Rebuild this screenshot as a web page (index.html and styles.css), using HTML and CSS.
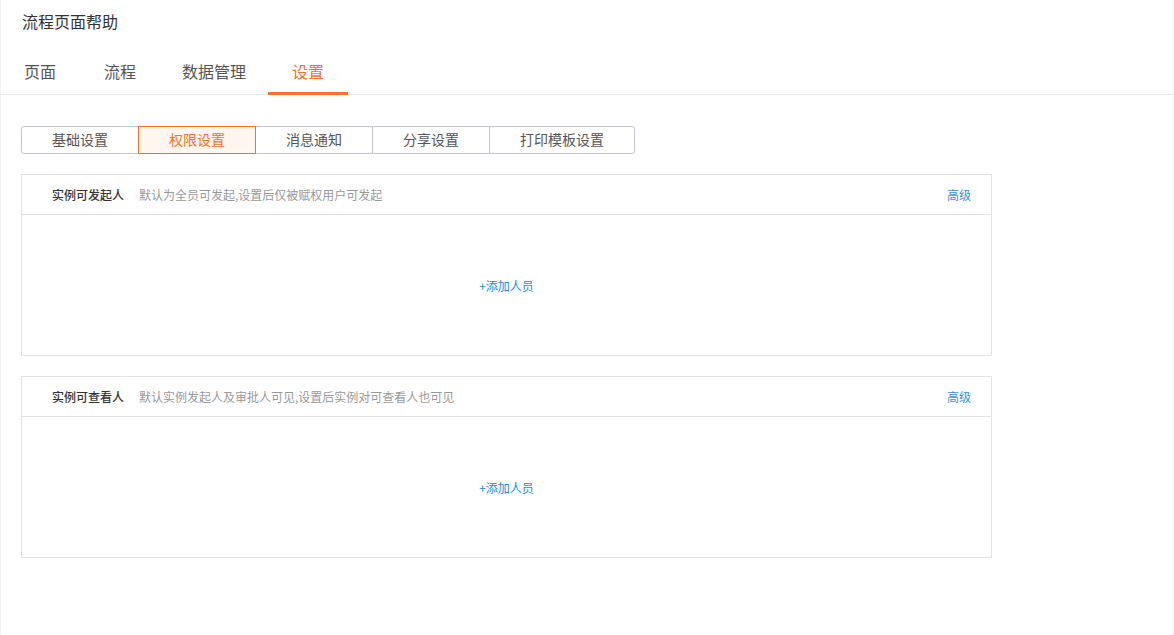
FILE: index.html
```html
<!DOCTYPE html>
<html lang="zh-CN">
<head>
<meta charset="utf-8">
<title>流程页面帮助</title>
<link rel="stylesheet" href="styles.css">
</head>
<body>
<div class="page">
  <div class="title">流程页面帮助</div>
  <div class="tabs">
    <div class="tab">页面</div>
    <div class="tab">流程</div>
    <div class="tab tab-wide">数据管理</div>
    <div class="tab active">设置</div>
  </div>
  <div class="content">
    <div class="seg">
      <div class="seg-item">基础设置</div>
      <div class="seg-item active">权限设置</div>
      <div class="seg-item">消息通知</div>
      <div class="seg-item">分享设置</div>
      <div class="seg-item">打印模板设置</div>
    </div>
    <div class="card">
      <div class="card-head">
        <span class="label">实例可发起人</span>
        <span class="desc">默认为全员可发起,设置后仅被赋权用户可发起</span>
        <a class="adv">高级</a>
      </div>
      <div class="card-body"><a class="add">+添加人员</a></div>
    </div>
    <div class="card">
      <div class="card-head">
        <span class="label">实例可查看人</span>
        <span class="desc">默认实例发起人及审批人可见,设置后实例对可查看人也可见</span>
        <a class="adv">高级</a>
      </div>
      <div class="card-body"><a class="add">+添加人员</a></div>
    </div>
  </div>
</div>
</body>
</html>
```
FILE: styles.css
```css
html, body {
  margin: 0;
  padding: 0;
  background: #fff;
}
body {
  font-family: "Noto Sans CJK SC", "Noto Sans", sans-serif;
  color: #333;
}
.page {
  height: 635px;
  box-sizing: border-box;
  border-left: 1px solid #f2f2f4;
  border-right: 1px solid #f2f2f4;
}
.title {
  font-size: 16px;
  line-height: 22px;
  padding: 10px 0 10px 21px;
  color: #333;
}
.tabs {
  display: flex;
  border-bottom: 1px solid #e6e6ec;
  margin-left: -1px;
}
.tab {
  position: relative;
  font-size: 16px;
  line-height: 22px;
  padding: 18px 24px 12px;
  color: #555;
}
.tab-wide {
  padding-left: 22px;
  padding-right: 22px;
}
.tab.active {
  color: #f37327;
}
.tab.active::after {
  content: "";
  position: absolute;
  left: 0;
  right: 0;
  bottom: -1px;
  height: 3px;
  background: #f37327;
}
.content {
  padding: 31px 20px;
}
.seg {
  display: flex;
  width: max-content;
}
.seg-item {
  font-size: 14px;
  line-height: 25px;
  padding: 0 30px 1px;
  color: #555;
  border: 1px solid #c4c6cf;
  margin-left: -1px;
  background: #fff;
}
.seg-item:first-child {
  margin-left: 0;
  border-radius: 3px 0 0 3px;
}
.seg-item:last-child {
  border-radius: 0 3px 3px 0;
}
.seg-item.active {
  color: #f37327;
  border-color: #f37327;
  background: #fff6f0;
  position: relative;
}
.card {
  width: 971px;
  box-sizing: border-box;
  border: 1px solid #e3e3e3;
  margin-top: 20px;
}
.card-head {
  display: flex;
  align-items: center;
  height: 39px;
  padding: 0 20px 0 30px;
  border-bottom: 1px solid #e3e3e3;
  font-size: 12px;
}
.label {
  color: #333;
  font-weight: 500;
}
.desc {
  color: #999;
  margin-left: 15px;
}
.adv {
  margin-left: auto;
  color: #3a91db;
  cursor: pointer;
}
.card-body {
  height: 140px;
  display: flex;
  align-items: center;
  justify-content: center;
  font-size: 12px;
}
.add {
  color: #1a8ae6;
  cursor: pointer;
}
```
